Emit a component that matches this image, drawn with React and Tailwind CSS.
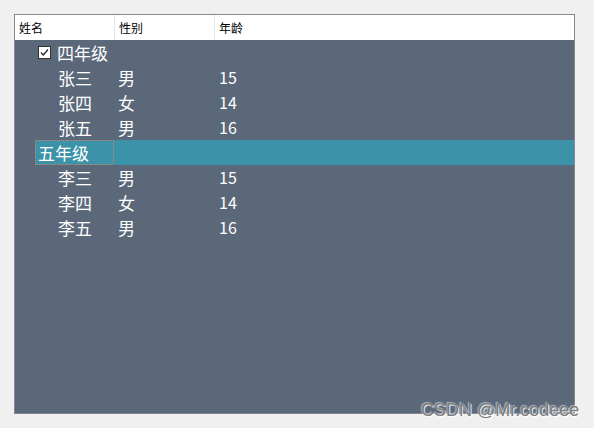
import React from "react";

const cjk = { fontFamily: '"Microsoft YaHei","Noto Sans CJK SC","Noto Sans",sans-serif' };

function Row({ name, sex, age }) {
  return (
    <div className="flex h-[25px] items-center text-[17px] leading-[25px] text-white">
      <div className="w-[100px] pl-[43px]">{name}</div>
      <div className="w-[100px] pl-[3px]">{sex}</div>
      <div className="pl-[4px] text-[16px]">{age}</div>
    </div>
  );
}

export default function App() {
  return (
    <div className="relative w-[594px] h-[428px] bg-[#f0f0f0] pt-[14px] pl-[14px]" style={cjk}>
      <div className="w-[561px] h-[400px] border border-[#828790] bg-[#5b687a] flex flex-col">
        <div className="flex h-[25px] bg-white text-[12px] leading-[25px] text-black">
          <div className="w-[100px] pl-[4px] border-r border-[#e5e5e5]">姓名</div>
          <div className="w-[100px] pl-[4px] border-r border-[#e5e5e5]">性别</div>
          <div className="pl-[4px]">年龄</div>
        </div>
        <div className="flex h-[25px] items-center text-[17px] leading-[25px] text-white">
          <div className="ml-[23px] w-[13px] h-[13px] bg-white border border-[#333] flex items-center justify-center">
            <svg width="11" height="11" viewBox="0 0 11 11">
              <path d="M2 5.5 L4.3 8 L9 2.5" fill="none" stroke="#222" strokeWidth="1.2" />
            </svg>
          </div>
          <span className="ml-[6px]">四年级</span>
        </div>
        <Row name="张三" sex="男" age="15" />
        <Row name="张四" sex="女" age="14" />
        <Row name="张五" sex="男" age="16" />
        <div className="flex h-[25px] ml-[20px] bg-[#3c92a8] text-[17px] leading-[23px] text-white">
          <div className="w-[79px] pl-[2px] border border-dotted border-[#d0805a]">五年级</div>
        </div>
        <Row name="李三" sex="男" age="15" />
        <Row name="李四" sex="女" age="14" />
        <Row name="李五" sex="男" age="16" />
      </div>
      <div
        className="absolute left-[421px] top-[399px] text-[18px] leading-[22px] text-[#7d7d7d]"
        style={{ fontFamily: '"Liberation Sans",Arial,sans-serif', textShadow: "1px 1px 1px #ffffff, -1px -1px 1px rgba(255,255,255,0.5)" }}
      >
        CSDN @Mr.codeee
      </div>
    </div>
  );
}
